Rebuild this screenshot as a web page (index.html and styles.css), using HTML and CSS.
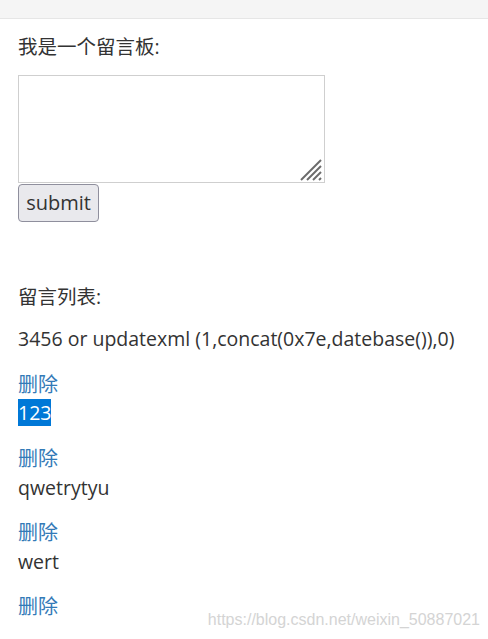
FILE: index.html
```html
<!DOCTYPE html>
<html lang="zh">
<head>
<meta charset="utf-8">
<title>留言板</title>
<link rel="stylesheet" href="styles.css">
</head>
<body>
<div class="topbar"></div>
<main class="container">
  <p class="title">我是一个留言板:</p>
  <form class="form">
    <div class="ta-wrap">
      <textarea class="ta"></textarea>
      <svg class="grip" width="22" height="22" viewBox="0 0 22 22" aria-hidden="true">
        <g stroke="#6b6b6b" stroke-width="2" stroke-linecap="butt">
          <line x1="1" y1="21" x2="21" y2="1"/>
          <line x1="7" y1="21" x2="21" y2="7"/>
          <line x1="13" y1="21" x2="21" y2="13"/>
          <line x1="19" y1="21" x2="21" y2="19"/>
        </g>
      </svg>
    </div>
    <button type="button" class="btn">submit</button>
  </form>
  <section class="list">
    <p class="list-title">留言列表:</p>
    <p class="msg">3456 or updatexml (1,concat(0x7e,datebase()),0)</p>
    <div class="item"><a class="del" href="#">删除</a><div class="txt"><span class="sel">123</span></div></div>
    <div class="item"><a class="del" href="#">删除</a><div class="txt">qwetrytyu</div></div>
    <div class="item"><a class="del" href="#">删除</a><div class="txt">wert</div></div>
    <div class="item"><a class="del" href="#">删除</a></div>
  </section>
</main>
<div class="watermark">https://blog.csdn.net/weixin_50887021</div>
</body>
</html>
```
FILE: styles.css
```css
html, body {
  margin: 0;
  padding: 0;
  background: #fff;
}
body {
  font-family: "Open Sans", "Noto Sans CJK SC", sans-serif;
  font-size: 19.5px;
  line-height: 28.6px;
  color: #333;
  position: relative;
  min-height: 639px;
  overflow: hidden;
}
.topbar {
  height: 18px;
  background: #f5f5f5;
  border-bottom: 1px solid #e6e6e6;
}
.container {
  padding: 0 18px;
}
.title {
  margin: 14px 0 13px;
}
.form {
  display: flex;
  flex-direction: column;
  align-items: flex-start;
}
.ta-wrap {
  position: relative;
  width: 307px;
  height: 108px;
}
.ta {
  display: block;
  box-sizing: border-box;
  width: 307px;
  height: 108px;
  margin: 0;
  border: 1px solid #cfcfcf;
  resize: none;
  font: inherit;
}
.grip {
  position: absolute;
  right: 3px;
  bottom: 2px;
}
.btn {
  margin-top: 1px;
  box-sizing: border-box;
  width: 81px;
  height: 38px;
  padding: 0;
  font-family: "Open Sans", sans-serif;
  font-size: 20px;
  color: #333;
  background: #e9e9ed;
  border: 1px solid #8f8f9d;
  border-radius: 4px;
}
.list {
  margin-top: 61px;
  display: flex;
  flex-direction: column;
  align-items: flex-start;
}
.list-title {
  margin: 0 0 14px;
}
.msg {
  margin: 0 0 17px;
}
.item {
  margin-bottom: 17px;
}
.del {
  display: block;
  color: #337ab7;
  text-decoration: none;
  font-size: 20px;
}
.sel {
  background: #0078d7;
  color: #fff;
}
.watermark {
  position: absolute;
  right: 8px;
  top: 609px;
  font-family: "Liberation Sans", Arial, sans-serif;
  font-size: 16px;
  line-height: 22px;
  color: #d4d4d4;
  text-shadow: 0 0 1px #fff;
}
```
